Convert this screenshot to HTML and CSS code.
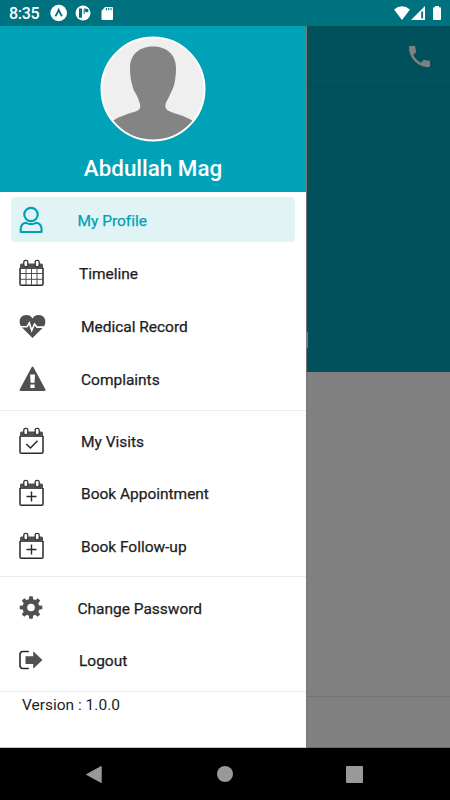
FILE: index.html
```html
<!DOCTYPE html>
<html lang="en">
<head>
<meta charset="utf-8">
<title>Menu</title>
<link rel="stylesheet" href="styles.css">
</head>
<body>
<svg width="0" height="0" class="defs">
  <symbol id="calendar" viewBox="0 0 28 30">
    <path d="M2 11V7Q2 5.500 3.500 5.500H23.500Q25 5.500 25 7V11Z" fill="#505052"/>
    <path d="M2 10V26Q2 27.300 3.300 27.300H23.700Q25 27.300 25 26V10" fill="none" stroke="#29292b" stroke-width="1.500"/>
    <rect x="5.800" y="2.300" width="4" height="6.600" rx="1.800" fill="#fff" stroke="#343436" stroke-width="1.300"/>
    <rect x="17.200" y="2.300" width="4" height="6.600" rx="1.800" fill="#fff" stroke="#343436" stroke-width="1.300"/>
  </symbol>
</svg>
<div class="screen">
  <header class="status">
    <span class="clock">8:35</span>
    <svg class="left-icons" width="66" height="18" viewBox="0 0 66 18">
      <circle cx="8.700" cy="9" r="8.300" fill="#fff"/>
      <path d="M5.400 12.300Q7 10 8.700 5.900Q10.400 10 12 12.300" fill="none" stroke="#00727f" stroke-width="1.800"/>
      <circle cx="33" cy="9" r="7.500" fill="#fff"/>
      <path d="M29 4.500h3v9.200H29z" fill="#00727f"/>
      <path d="M34.200 10V5H36" fill="none" stroke="#00727f" stroke-width="1"/>
      <circle cx="36.700" cy="6.600" r="1.800" fill="#00727f"/>
      <path d="M55.200 3H62Q63 3 63 4V15Q63 16 62 16H52.500Q51.500 16 51.500 15V6.700Z" fill="#fff"/>
      <path d="M56.400 4v2.300M58.700 4v2.300M61 4v2.300" stroke="#00727f" stroke-width="1.100"/>
    </svg>
    <svg class="right-icons" width="50" height="16" viewBox="0 0 50 16">
      <path d="M0 4.500Q8 -2 16 4.500L8 15Z" fill="#fff"/>
      <path d="M31 1V15H17Z" fill="#fff"/>
      <path d="M27.200 6.500h1.900v6.800h-1.900z" fill="#00727f"/>
      <path d="M41 2.200V1h4v1.200h1Q47 2.200 47 3.200V14Q47 15 46 15H40Q39 15 39 14V3.200Q39 2.200 40 2.200Z" fill="#fff"/>
    </svg>
  </header>
  <main class="body">
    <aside class="drawer">
      <div class="account">
        <svg class="avatar" width="106" height="106" viewBox="0 0 106 106">
          <defs><clipPath id="face"><circle cx="53" cy="53" r="51"/></clipPath></defs>
          <circle cx="53" cy="53" r="51.500" fill="#efefef"/>
          <path clip-path="url(#face)" fill="#848484" d="M0 94C14 83 17 82 26 78.500C32 76 37 76 39.500 73C41.500 70 39 65 37.500 61C36 57 34 56 33 52C31 46 30 39 30 32C30 18 40 10.500 53 10.500C66 10.500 76 18 76 32C76 39 75 47 73 52C72 55 70 58 69 61C67 65 64 69 66 72.500C68 76 75 77 80 79C88 82 93 84 106 94V106H0Z"/>
          <circle cx="53" cy="53" r="51.500" fill="none" stroke="#fff" stroke-width="2"/>
        </svg>
        <h1 class="name">Abdullah Mag</h1>
      </div>
      <nav class="menu">
        <div class="group">
          <a class="item active"><svg class="icon" viewBox="0 0 28 30"><circle cx="13" cy="9.500" r="6.700" fill="none" stroke="#00a1b5" stroke-width="2.200"/><path d="M2.700 27V24.500Q2.700 18.500 8 17.800Q13 20.500 18 17.800Q23.600 18.500 23.600 24.500V27Z" fill="none" stroke="#00a1b5" stroke-width="2.100" stroke-linejoin="round"/></svg><span class="label near">My Profile</span></a>
          <a class="item"><svg class="icon" viewBox="0 0 28 30"><use href="#calendar"/><path d="M8 11V27M13.500 11V27M19 11V27M2 15.500H25M2 21.300H25" stroke="#505052" stroke-width="1"/></svg><span class="label mid">Timeline</span></a>
          <a class="item"><svg class="icon" viewBox="0 0 28 30"><path fill="#505052" d="M14.500 27L3 15.500C0 10.500 2 4.300 8.300 4.100Q12.400 4 14.500 7.500Q16.600 4 20.700 4.100C27 4.300 29 10.500 26 15.500Z"/><path d="M0 15.800H9L11.300 12L13.700 19.500L16.500 13L18.900 16.100H28" fill="none" stroke="#fff" stroke-width="1.600"/></svg><span class="label">Medical Record</span></a>
          <a class="item"><svg class="icon" viewBox="0 0 28 30"><path d="M14.500 3.600L26.600 25.900H2.600Z" fill="#505052" stroke="#505052" stroke-width="2" stroke-linejoin="round"/><path d="M12.100 10.500H17L16.500 18.700H12.600Z M12.400 20.500H16.600V24H12.400Z" fill="#fff"/></svg><span class="label">Complaints</span></a>
        </div>
        <div class="group visits">
          <a class="item"><svg class="icon" viewBox="0 0 28 30"><use href="#calendar"/><path d="M8.300 18L12.500 22L19.500 14.800" fill="none" stroke="#29292b" stroke-width="1.500"/></svg><span class="label">My Visits</span></a>
          <a class="item"><svg class="icon" viewBox="0 0 28 30"><use href="#calendar"/><path d="M8.500 18.500H18.500M13.500 13.500V23.500" stroke="#29292b" stroke-width="1.400"/></svg><span class="label">Book Appointment</span></a>
          <a class="item"><svg class="icon" viewBox="0 0 28 30"><use href="#calendar"/><path d="M8.500 18.500H18.500M13.500 13.500V23.500" stroke="#29292b" stroke-width="1.400"/></svg><span class="label">Book Follow-up</span></a>
        </div>
        <div class="group settings">
          <a class="item"><svg class="icon" viewBox="0 0 28 30"><g fill="#505052"><circle cx="13" cy="14.500" r="8.500"/><path id="tooth" d="M10.700 8L11.300 3.200H14.700L15.300 8V21L14.700 25.800H11.300L10.700 21Z"/><use href="#tooth" transform="rotate(45 13 14.500)"/><use href="#tooth" transform="rotate(90 13 14.500)"/><use href="#tooth" transform="rotate(135 13 14.500)"/></g><circle cx="13" cy="14.500" r="3.800" fill="#fff"/></svg><span class="label near">Change Password</span></a>
          <a class="item"><svg class="icon" viewBox="0 0 28 30"><path d="M10.800 6.500H5Q2 6.500 2 9.500V20.500Q2 23.500 5 23.500H10.800" fill="none" stroke="#29292b" stroke-width="1.600"/><path d="M7.500 11.300H15.200V6.300L24.500 15L15.200 23.700V19.100H7.500Z" fill="#505052"/></svg><span class="label mid">Logout</span></a>
        </div>
      </nav>
      <p class="version">Version : 1.0.0</p>
    </aside>
    <section class="page">
      <div class="toolbar">
        <svg width="21" height="21" viewBox="3 3 18 18"><path fill="#808080" d="M6.620 10.790c1.440 2.830 3.760 5.140 6.590 6.590l2.200-2.200c.27-.27.67-.36 1.020-.24 1.120.37 2.330.57 3.570.57.55 0 1 .45 1 1V20c0 .55-.45 1-1 1C10.610 21 3 13.390 3 4c0-.55.45-1 1-1h3.500c.55 0 1 .45 1 1 0 1.250.2 2.450.57 3.570.11.35.03.74-.25 1.020z"/></svg>
      </div>
      <div class="banner"><i class="edge"></i></div>
      <div class="content"></div>
      <div class="tabs"></div>
    </section>
  </main>
  <footer class="navbar">
    <svg width="17" height="19" viewBox="0 0 17 19"><path d="M16.200 1.500V17.500L1.500 9.500Z" fill="#999" stroke="#999" stroke-linejoin="round"/></svg>
    <span class="home"></span>
    <span class="recent"></span>
  </footer>
</div>
</body>
</html>
```
FILE: styles.css
```css
* { box-sizing: border-box; }
body { margin: 0; font-family: Roboto, sans-serif; }
.defs { display: none; }
.screen { width: 450px; height: 800px; display: grid; grid-template-rows: 26px 722px 52px; overflow: hidden; }

.status { background: #00727f; color: #fff; display: flex; align-items: center; padding: 0 6px 0 9px; }
.clock { width: 41px; font-size: 16px; font-weight: 500; letter-spacing: -0.3px; line-height: 26px; padding-top: 2px; }
.right-icons { margin-left: auto; }

.body { display: grid; grid-template-columns: 306px 144px; min-height: 0; }
.drawer { background: #fff; display: flex; flex-direction: column; border-bottom: 1px solid #c4c4c4; }
.account { height: 166px; background: #00a2b7; display: flex; flex-direction: column; align-items: center; padding-top: 10px; }
.avatar { flex: none; }
.name { margin: 12px 0 0; color: #fff; font-size: 22.4px; font-weight: 500; line-height: 28px; }

.group { display: flex; flex-direction: column; gap: 8px; height: 219px; padding: 5px 11px 0; border-bottom: 1px solid #ececec; }
.visits { height: 166px; padding-top: 7px; gap: 7.5px; }
.settings { height: 115px; padding-top: 8px; gap: 7.5px; }
.item { height: 45px; flex: none; display: flex; align-items: center; padding-left: 7px; border-radius: 4px; color: #1d1d1f; }
.active { background: #e0f3f5; color: #00a1b5; }
.icon { width: 28px; height: 30px; flex: none; }
.label { margin-left: 35px; padding-top: 2.6px; font-size: 15.5px; -webkit-text-stroke: 0.25px currentColor; letter-spacing: -0.02px; line-height: 20px; white-space: nowrap; }
.mid { margin-left: 33px; }
.near { margin-left: 31.5px; }
.version { margin: 3px 0 0 22px; font-size: 15.5px; line-height: 20px; color: #1d1d1f; }

.page { display: grid; grid-template-rows: 62px 284px 324px 52px; border-left: 1px solid #777; background: #808080; }
.toolbar { background: #00515b; display: flex; justify-content: flex-end; align-items: center; padding-right: 20px; border-bottom: 1px solid #004b54; }
.banner { background: #00515b; padding-top: 244px; }
.edge { display: block; width: 1px; height: 16px; background: #808080; }
.content { min-width: 0; }
.tabs { border-top: 1px solid #747474; border-bottom: 1px solid #666; }

.navbar { background: #000; display: flex; align-items: center; padding-left: 85px; }
.home { width: 16px; height: 16px; border-radius: 50%; background: #999; margin-left: 115px; }
.recent { width: 17px; height: 17px; border-radius: 1px; background: #999; margin-left: 113px; }
```
